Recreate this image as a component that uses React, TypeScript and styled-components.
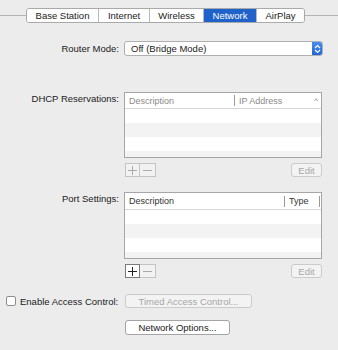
import React from "react";
import styled, { createGlobalStyle } from "styled-components";

const GlobalStyle = createGlobalStyle`
  html, body {
    margin: 0;
    padding: 0;
    background: #ececec;
  }
  body {
    font-family: "Liberation Sans", Arial, sans-serif;
    font-size: 9.5px;
    color: #1b1b1b;
  }
`;

const Page = styled.div`
  width: 338px;
  height: 350px;
  background: #ececec;
  padding-top: 8px;
  box-sizing: border-box;
  overflow: hidden;
`;

const TabBar = styled.div`
  display: flex;
  align-items: center;
  height: 15px;
`;

const TabLine = styled.div<{ $width?: number }>`
  height: 1px;
  background: #b4b4b4;
  flex: ${(p) => (p.$width ? `0 0 ${p.$width}px` : "1")};
`;

const TabGroup = styled.div`
  display: flex;
  height: 15px;
  border: 1px solid #a9a9a9;
  border-radius: 3px;
  background: #fff;
  overflow: hidden;
  box-sizing: border-box;
`;

const Tab = styled.div<{ $width: number; $active?: boolean }>`
  width: ${(p) => p.$width}px;
  display: flex;
  align-items: center;
  justify-content: center;
  font-size: 9.5px;
  color: ${(p) => (p.$active ? "#fff" : "#222")};
  background: ${(p) => (p.$active ? "#1f62c9" : "#fff")};
  border-left: 1px solid #b8b8b8;
  &:first-child {
    border-left: none;
  }
`;

const Form = styled.div`
  display: grid;
  grid-template-columns: 119px 199px;
  column-gap: 5px;
  align-items: start;
`;

const Label = styled.div<{ $top?: number }>`
  text-align: right;
  white-space: nowrap;
  font-size: 9.5px;
  line-height: 15px;
  color: #1b1b1b;
  margin-top: ${(p) => p.$top ?? 0}px;
`;

const Cell = styled.div<{ $top?: number }>`
  margin-top: ${(p) => p.$top ?? 0}px;
`;

const Popup = styled.div`
  height: 15px;
  box-sizing: border-box;
  border: 1px solid #b0b0b0;
  border-radius: 3px;
  background: #fff;
  display: flex;
  align-items: center;
  overflow: hidden;
`;

const PopupText = styled.div`
  flex: 1;
  padding-left: 6px;
  font-size: 9.5px;
  color: #1b1b1b;
`;

const Stepper = styled.div`
  width: 11px;
  height: 15px;
  margin: -1px -1px -1px 0;
  background: linear-gradient(#4a8ff0, #1d63d4);
  border-radius: 0 3px 3px 0;
  display: flex;
  align-items: center;
  justify-content: center;
`;

const Table = styled.div<{ $height: number }>`
  width: 198px;
  height: ${(p) => p.$height}px;
  border: 1px solid #a6a6a6;
  box-sizing: border-box;
  background: #fff;
  display: flex;
  flex-direction: column;
  overflow: hidden;
`;

const HeaderRow = styled.div<{ $height: number }>`
  height: ${(p) => p.$height}px;
  display: flex;
  align-items: center;
  border-bottom: 1px solid #d6d6d6;
  flex-shrink: 0;
`;

const HeaderCell = styled.div<{ $width?: number; $muted?: boolean }>`
  flex: ${(p) => (p.$width ? `0 0 ${p.$width}px` : "1")};
  box-sizing: border-box;
  padding-left: 4px;
  font-size: 9px;
  color: ${(p) => (p.$muted ? "#8a8a8a" : "#333")};
  display: flex;
  align-items: center;
  justify-content: space-between;
  height: 11px;
  & + & {
    border-left: 1px solid #9a9a9a;
  }
`;

const HeaderEnd = styled.div`
  width: 1px;
  height: 11px;
  background: #9a9a9a;
  margin-right: 1px;
`;

const SortCaret = styled.span`
  font-size: 8px;
  color: #777;
  padding-right: 3px;
`;

const Row = styled.div<{ $alt?: boolean }>`
  height: 14px;
  flex-shrink: 0;
  background: ${(p) => (p.$alt ? "#f3f3f3" : "#fff")};
`;

const ButtonRow = styled.div`
  display: flex;
  justify-content: space-between;
  margin-top: 5px;
  width: 198px;
`;

const Segmented = styled.div`
  display: flex;
  margin-left: 1px;
`;

const Segment = styled.div<{ $enabled?: boolean }>`
  width: 15px;
  height: 14px;
  box-sizing: border-box;
  border: 1px solid ${(p) => (p.$enabled ? "#7a7a7a" : "#c4c4c4")};
  background: ${(p) => (p.$enabled ? "#fff" : "#f2f2f2")};
  display: flex;
  align-items: center;
  justify-content: center;
  & + & {
    border-left: none;
    width: 16px;
  }
`;

const Button = styled.div<{ $width: number; $disabled?: boolean; $height?: number }>`
  width: ${(p) => p.$width}px;
  height: ${(p) => p.$height ?? 14}px;
  box-sizing: border-box;
  border: 1px solid ${(p) => (p.$disabled ? "#cbcbcb" : "#a4a4a4")};
  border-radius: 3px;
  background: ${(p) => (p.$disabled ? "#f3f3f3" : "#fff")};
  color: ${(p) => (p.$disabled ? "#a6a6a6" : "#1b1b1b")};
  font-size: 9.5px;
  display: flex;
  align-items: center;
  justify-content: center;
  white-space: nowrap;
`;

const AccessRow = styled.div`
  display: flex;
  align-items: center;
  margin-top: 16px;
  height: 14px;
`;

const CheckLabel = styled.label`
  display: flex;
  align-items: center;
  gap: 4px;
  padding-left: 6px;
  width: 125px;
  box-sizing: border-box;
  font-size: 9.5px;
  white-space: nowrap;
`;

const Checkbox = styled.span`
  width: 10px;
  height: 10px;
  box-sizing: border-box;
  border: 1px solid #8d8d8d;
  border-radius: 2px;
  background: #fff;
  flex-shrink: 0;
`;

const OptionsRow = styled.div`
  padding-left: 125px;
  margin-top: 12px;
`;

const StepIcon = () => (
  <svg width="7" height="10" viewBox="0 0 7 10">
    <path d="M1 4 L3.5 1.5 L6 4" fill="none" stroke="#fff" strokeWidth="1.2" />
    <path d="M1 6 L3.5 8.5 L6 6" fill="none" stroke="#fff" strokeWidth="1.2" />
  </svg>
);

const Plus = ({ color }: { color: string }) => (
  <svg width="9" height="9" viewBox="0 0 9 9">
    <path d="M4.5 0 V9 M0 4.5 H9" stroke={color} strokeWidth="1" />
  </svg>
);

const Minus = ({ color }: { color: string }) => (
  <svg width="9" height="9" viewBox="0 0 9 9">
    <path d="M0 4.5 H9" stroke={color} strokeWidth="1" />
  </svg>
);

const tabs = [
  { name: "Base Station", width: 71 },
  { name: "Internet", width: 50 },
  { name: "Wireless", width: 53 },
  { name: "Network", width: 52, active: true },
  { name: "AirPlay", width: 47 },
];

const rows = [false, true, false, true];

export default function App() {
  return (
    <Page>
      <GlobalStyle />
      <TabBar>
        <TabLine $width={26} />
        <TabGroup>
          {tabs.map((t) => (
            <Tab key={t.name} $width={t.width} $active={t.active}>
              {t.name}
            </Tab>
          ))}
        </TabGroup>
        <TabLine />
      </TabBar>

      <Form>
        <Label $top={18}>Router Mode:</Label>
        <Cell $top={18}>
          <Popup>
            <PopupText>Off (Bridge Mode)</PopupText>
            <Stepper>
              <StepIcon />
            </Stepper>
          </Popup>
        </Cell>

        <Label $top={35}>DHCP Reservations:</Label>
        <Cell $top={36}>
          <Table $height={66}>
            <HeaderRow $height={15}>
              <HeaderCell $width={109} $muted>
                Description
              </HeaderCell>
              <HeaderCell $muted>
                IP Address
                <SortCaret>^</SortCaret>
              </HeaderCell>
            </HeaderRow>
            {rows.map((alt, i) => (
              <Row key={i} $alt={alt} />
            ))}
          </Table>
          <ButtonRow>
            <Segmented>
              <Segment>
                <Plus color="#aaa" />
              </Segment>
              <Segment>
                <Minus color="#aaa" />
              </Segment>
            </Segmented>
            <Button $width={31} $disabled>
              Edit
            </Button>
          </ButtonRow>
        </Cell>

        <Label $top={14}>Port Settings:</Label>
        <Cell $top={15}>
          <Table $height={67}>
            <HeaderRow $height={16}>
              <HeaderCell $width={159}>Description</HeaderCell>
              <HeaderCell>Type</HeaderCell>
              <HeaderEnd />
            </HeaderRow>
            {rows.map((alt, i) => (
              <Row key={i} $alt={alt} />
            ))}
          </Table>
          <ButtonRow>
            <Segmented>
              <Segment $enabled>
                <Plus color="#222" />
              </Segment>
              <Segment>
                <Minus color="#aaa" />
              </Segment>
            </Segmented>
            <Button $width={31} $disabled>
              Edit
            </Button>
          </ButtonRow>
        </Cell>
      </Form>

      <AccessRow>
        <CheckLabel>
          <Checkbox />
          Enable Access Control:
        </CheckLabel>
        <Button $width={127} $disabled>
          Timed Access Control...
        </Button>
      </AccessRow>

      <OptionsRow>
        <Button $width={105} $height={15}>
          Network Options...
        </Button>
      </OptionsRow>
    </Page>
  );
}
